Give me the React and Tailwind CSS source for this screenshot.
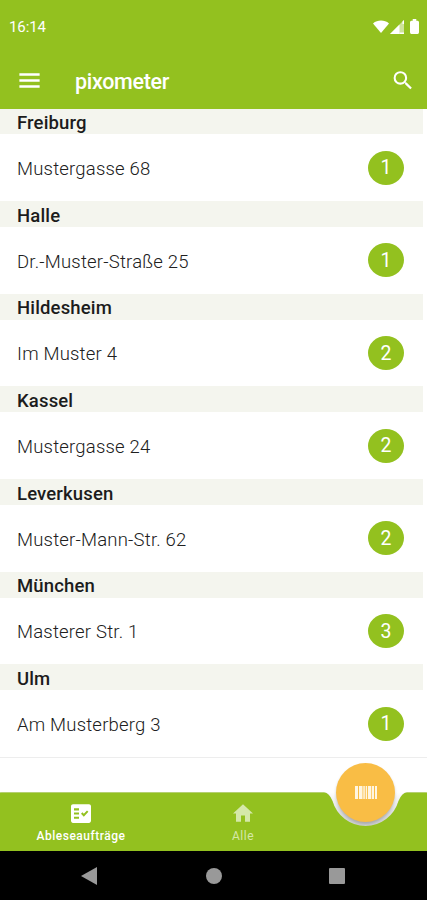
import React, { useState } from 'react';
import { MdFactCheck, MdHome, MdMenu, MdSearch } from 'react-icons/md';

const LOCATIONS = [
  { city: 'Freiburg', street: 'Mustergasse 68', count: 1 },
  { city: 'Halle', street: 'Dr.-Muster-Straße 25', count: 1 },
  { city: 'Hildesheim', street: 'Im Muster 4', count: 2 },
  { city: 'Kassel', street: 'Mustergasse 24', count: 2 },
  { city: 'Leverkusen', street: 'Muster-Mann-Str. 62', count: 2 },
  { city: 'München', street: 'Masterer Str. 1', count: 3 },
  { city: 'Ulm', street: 'Am Musterberg 3', count: 1 },
];

function StatusBar() {
  return (
    <div className="flex h-[53px] items-center justify-between pl-[9px] pr-[7px]">
      <span className="pt-[1px] text-[15px] leading-none tracking-[-0.1px]">16:14</span>
      <div className="flex items-center">
        <svg width="16" height="14" viewBox="0 0 16 14" fill="currentColor">
          <path d="M0 3.4C4.6-.4 11.4-.4 16 3.4L8 13Z" />
        </svg>
        <svg className="ml-[1px]" width="14" height="14" viewBox="0 0 14 14" fill="currentColor">
          <path d="M14 0v14H0Z" opacity="0.55" />
          <path d="M9.5 4.5V14H0ZM12.5 1.5 14 0v4h-1.5Z" />
          <path d="M9.5 12.5H14V14H9.5Z" />
        </svg>
        <svg className="ml-[6px] mr-[1px]" width="9" height="15" viewBox="0 0 10 15" preserveAspectRatio="none" fill="currentColor">
          <path d="M3 0h4v1.7h1.5Q10 1.7 10 3.2v10Q10 15 8.5 15h-7Q0 15 0 13.2v-10Q0 1.7 1.5 1.7H3Z" />
        </svg>
      </div>
    </div>
  );
}

function LocationSection({ city, street, count }) {
  return (
    <section className="h-[92.67px]">
      <div className="mr-[4px] flex h-[26px] items-center bg-[#f4f5ee] pl-[17px] pt-[4px]">
        <h2 className="text-[18.5px] font-medium leading-none tracking-[0.15px] text-[#1c1c1c]">{city}</h2>
      </div>
      <div className="flex h-[66.67px] items-center justify-between pl-[17px] pr-[23px]">
        <span className="pt-[3px] text-[18.5px] font-light leading-none tracking-[0.2px] text-[#202020]">{street}</span>
        <span className="flex h-[34px] w-[36px] items-center justify-center rounded-[50%] bg-[#93c11f] pt-[1px] text-[19.5px] leading-none text-white">
          {count}
        </span>
      </div>
    </section>
  );
}

// Bottom bar whose top edge curves around the scan button
function TabBar({ active, onSelect }) {
  return (
    <nav className="relative h-[59px] text-white">
      <svg className="absolute left-0 top-0" width="427" height="59" viewBox="0 0 427 59">
        <defs>
          <filter id="edge" x="-5%" y="-20%" width="110%" height="140%">
            <feGaussianBlur stdDeviation="0.8" />
          </filter>
          <linearGradient id="notch" x1="0" y1="0" x2="0" y2="1">
            <stop offset="0" stopColor="#ffffff" />
            <stop offset="0.5" stopColor="#e3e4e6" />
            <stop offset="1" stopColor="#cdced0" />
          </linearGradient>
        </defs>
        <path
          d="M0 .8H324Q329 .8 332.5 9A34.3 34.3 0 0 0 398.5 9Q402 .8 407 .8H427"
          fill="none"
          stroke="#b9c99a"
          strokeWidth="2"
          filter="url(#edge)"
        />
        <path d="M324 0Q329 .5 332.5 9A34.3 34.3 0 0 0 398.5 9Q402 .5 407 0Z" fill="url(#notch)" />
        <path
          d="M0 .5H324Q329 .5 332.5 9A34.3 34.3 0 0 0 398.5 9Q402 .5 407 .5H427V59H0Z"
          fill="#93c11f"
        />
      </svg>
      <div className="relative flex h-full">
        <button
          onClick={() => onSelect('orders')}
          className={`flex w-[162px] flex-col items-center pt-[9px] ${active === 'orders' ? 'text-white' : 'text-[#d5e8a9]'}`}
        >
          <MdFactCheck className="h-[25px] w-[24px]" preserveAspectRatio="none" />
          <span className="mt-[3px] text-[12px] font-medium leading-[14px] tracking-[0.5px]">Ableseaufträge</span>
        </button>
        <button
          onClick={() => onSelect('all')}
          className={`flex w-[162px] flex-col items-center pt-[9px] ${active === 'all' ? 'text-white' : 'text-[#d5e8a9]'}`}
        >
          <MdHome className="h-[25px] w-[24px]" preserveAspectRatio="none" />
          <span className="mt-[3px] text-[12px] leading-[14px] tracking-[0.5px]">Alle</span>
        </button>
      </div>
      <button className="absolute left-[336px] top-[-29px] flex h-[59px] w-[59px] items-center justify-center rounded-full bg-[#f9bd45] shadow-[0_2px_3px_rgba(0,0,0,0.2)]">
        <svg width="22" height="13" viewBox="0 0 22 13" fill="#fff6e2">
          <path d="M0 0h3v13H0ZM4 0h3.5v13H4ZM8.3 0h1.5v13H8.3ZM10.7 0h1.4v13h-1.4ZM13 0h3.3v13H13ZM17 0h2v13h-2ZM20 0h2v13h-2Z" />
        </svg>
      </button>
    </nav>
  );
}

export default function App() {
  const [tab, setTab] = useState('orders');

  return (
    <div className="flex h-[900px] w-[427px] flex-col overflow-hidden bg-white font-['Roboto',sans-serif]">
      <header className="relative z-10 h-[109px] shrink-0 bg-[#93c11f] text-white">
        <StatusBar />
        <div className="flex h-[56px] items-center pl-[16px] pr-[11px]">
          <MdMenu className="-mt-[2px] h-[29px] w-[27px]" preserveAspectRatio="none" />
          <h1 className="ml-[32px] pt-[2px] text-[21.5px] font-medium leading-none tracking-[-0.3px]">pixometer</h1>
          <MdSearch className="-mt-[2px] ml-auto h-[25px] w-[26px]" />
        </div>
      </header>

      <main className="-mt-[0.7px] min-h-0 flex-1">
        <div className="border-b border-[#ededed]">
          {LOCATIONS.map((location) => (
            <LocationSection key={location.city} {...location} />
          ))}
        </div>
      </main>

      <TabBar active={tab} onSelect={setTab} />

      {/* Android navigation */}
      <div className="flex h-[49px] shrink-0 items-center bg-black pl-[81px] text-[#999999]">
        <svg width="16" height="18" viewBox="0 0 16 18" fill="currentColor">
          <path d="M16 0v18L0 9Z" />
        </svg>
        <span className="ml-[109px] h-[16px] w-[16px] rounded-full bg-[#999999]" />
        <span className="ml-[107px] h-[16px] w-[16px] rounded-[1px] bg-[#999999]" />
      </div>
    </div>
  );
}
